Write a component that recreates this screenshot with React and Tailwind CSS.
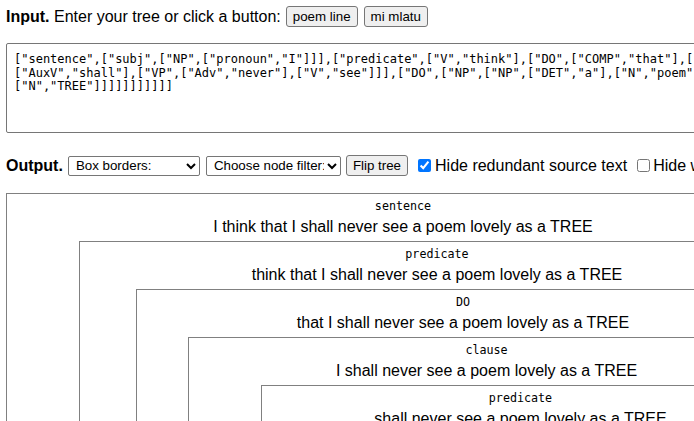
import { useState } from 'react';

const SOURCE_LINES = [
  '["sentence",["subj",["NP",["pronoun","I"]]],["predicate",["V","think"],["DO",["COMP","that"],["clause",["subj",["NP",["pronoun","I"]]],["predicate",',
  '["AuxV","shall"],["VP",["Adv","never"],["V","see"]]],["DO",["NP",["NP",["DET","a"],["N","poem"]],["AP",["Adj","lovely"],["PP",["P","as"],["NP",["DET","a"],',
  '["N","TREE"]]]]]]]]]]]',
];

// nodes shown with borders; gap = width of the hidden left sibling column
const TREE = {
  label: 'sentence',
  text: 'I think that I shall never see a poem lovely as a TREE',
  gap: 72,
  child: {
    label: 'predicate',
    text: 'think that I shall never see a poem lovely as a TREE',
    gap: 56,
    child: {
      label: 'DO',
      text: 'that I shall never see a poem lovely as a TREE',
      gap: 51,
      child: {
        label: 'clause',
        text: 'I shall never see a poem lovely as a TREE',
        gap: 72,
        child: {
          label: 'predicate',
          text: 'shall never see a poem lovely as a TREE',
          gap: 60,
          child: {
            label: 'VP',
            text: 'never see',
            gap: 0,
            child: null,
          },
        },
      },
    },
  },
};

const mono = "font-['DejaVu_Sans_Mono',monospace]";
const btn =
  'shrink-0 h-[21px] px-[6px] bg-[#efefef] border border-[#767676] rounded-[3px] text-[13.33px] leading-none text-black';
const sel =
  'shrink-0 h-[20px] pl-[3px] bg-white border border-[#767676] rounded-[2px] text-[13.33px] text-black';

function NodeBox({ node }) {
  return (
    <div className="border border-[#808080] min-w-0 flex-1">
      <div className={`${mono} text-[11.7px] leading-[16px] h-4 mt-1 text-center whitespace-nowrap`}>
        {node.label}
      </div>
      <div className="text-[16px] leading-[18px] mt-1 text-center whitespace-nowrap">{node.text}</div>
      <div className="flex pr-[4px] mt-[5px] pb-[5px]">
        <div className="shrink-0" style={{ width: node.gap }} />
        {node.child ? <NodeBox node={node.child} /> : <div className="h-6" />}
      </div>
    </div>
  );
}

export default function App() {
  const [hideRedundant, setHideRedundant] = useState(true);
  const [hideWords, setHideWords] = useState(false);

  return (
    <div className="w-[694px] h-[421px] overflow-hidden bg-white text-black font-['Liberation_Sans',Arial,sans-serif] text-[16px]">
      <div className="flex items-center pt-[6px] pl-[6px] h-[27px] leading-[21px] whitespace-nowrap">
        <span className="shrink-0">
          <b>Input.</b> Enter your tree or click a button:
        </span>
        <button className={`${btn} ml-[5px]`}>poem line</button>
        <button className={`${btn} ml-[6px]`}>mi mlatu</button>
      </div>

      <div
        className={`${mono} ml-[6px] mt-[16px] w-[1000px] h-[90px] border border-[#767676] rounded-[2px] pl-[7px] pt-[9px] text-[12px] leading-[13.5px] whitespace-pre`}
      >
        {SOURCE_LINES.map((line, i) => (
          <div key={i}>{line}</div>
        ))}
      </div>

      <div className="flex items-center pl-[6px] mt-[22px] h-[21px] leading-[21px] whitespace-nowrap">
        <b className="shrink-0">Output.</b>
        <select className={`${sel} ml-[5px] w-[132px]`} defaultValue="">
          <option value="">Box borders:</option>
          <option value="all">All boxes</option>
          <option value="none">No boxes</option>
        </select>
        <select className={`${sel} ml-[6px] w-[135px]`} defaultValue="">
          <option value="">Choose node filter:</option>
        </select>
        <button className={`${btn} ml-[5px]`}>Flip tree</button>
        <input
          type="checkbox"
          checked={hideRedundant}
          onChange={(e) => setHideRedundant(e.target.checked)}
          className="shrink-0 ml-[10px] mr-[4px] w-[13px] h-[13px] accent-[#0075ff]"
        />
        <span className="shrink-0">Hide redundant source text</span>
        <input
          type="checkbox"
          checked={hideWords}
          onChange={(e) => setHideWords(e.target.checked)}
          className="shrink-0 ml-[10px] mr-[3px] w-[13px] h-[13px]"
        />
        <span className="shrink-0">Hide word nodes</span>
      </div>

      <div className="ml-[6px] mt-[17px] w-[794px] flex">
        <NodeBox node={TREE} />
      </div>
    </div>
  );
}
